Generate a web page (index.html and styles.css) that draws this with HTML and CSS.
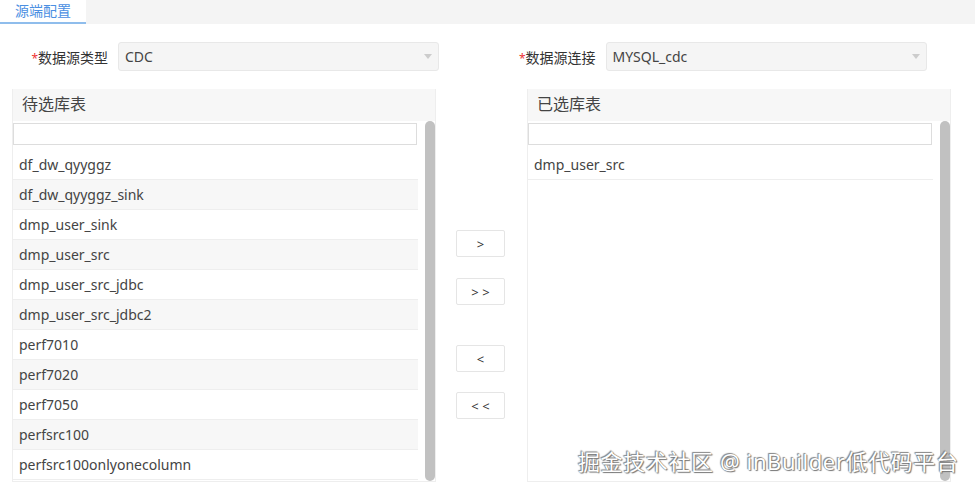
FILE: index.html
```html
<!DOCTYPE html>
<html lang="zh-CN">
<head>
  <meta charset="UTF-8">
  <title>源端配置</title>
  <link rel="stylesheet" href="styles.css">
</head>
<body>
  <div class="tabs">
    <div class="tab active">源端配置</div>
  </div>

  <div class="form-row">
    <div class="field">
      <label class="field-label"><span class="req">*</span>数据源类型</label>
      <div class="select">
        <span>CDC</span>
        <span class="arrow"></span>
      </div>
    </div>
    <div class="field">
      <label class="field-label"><span class="req">*</span>数据源连接</label>
      <div class="select">
        <span>MYSQL_cdc</span>
        <span class="arrow"></span>
      </div>
    </div>
  </div>

  <div class="transfer">
    <div class="panel">
      <div class="panel-header">待选库表</div>
      <div class="panel-body">
        <div class="list-col">
          <input class="search" type="text">
          <ul class="list">
            <li>df_dw_qyyggz</li>
            <li>df_dw_qyyggz_sink</li>
            <li>dmp_user_sink</li>
            <li>dmp_user_src</li>
            <li>dmp_user_src_jdbc</li>
            <li>dmp_user_src_jdbc2</li>
            <li>perf7010</li>
            <li>perf7020</li>
            <li>perf7050</li>
            <li>perfsrc100</li>
            <li>perfsrc100onlyonecolumn</li>
          </ul>
        </div>
        <div class="scrollbar"></div>
      </div>
    </div>

    <div class="actions">
      <button class="move-btn btn-one">&gt;</button>
      <button class="move-btn btn-all">&gt; &gt;</button>
      <button class="move-btn btn-back">&lt;</button>
      <button class="move-btn btn-back-all">&lt; &lt;</button>
    </div>

    <div class="panel">
      <div class="panel-header">已选库表</div>
      <div class="panel-body">
        <div class="list-col">
          <input class="search" type="text">
          <ul class="list">
            <li>dmp_user_src</li>
          </ul>
        </div>
        <div class="scrollbar"></div>
      </div>
    </div>
  </div>

  <div class="watermark">掘金技术社区 @ inBuilder低代码平台</div>
</body>
</html>
```

FILE: styles.css
```css
* {
  margin: 0;
  padding: 0;
  box-sizing: border-box;
  font-family: "Noto Sans", "Noto Sans CJK SC", sans-serif;
}

body {
  width: 975px;
  height: 488px;
  overflow: hidden;
  background: #fff;
  color: #444;
  position: relative;
}

.tabs {
  height: 24px;
  background: #f4f4f4;
  display: flex;
}

.tab {
  width: 86px;
  height: 24px;
  line-height: 21px;
  font-size: 14px;
  padding-left: 15px;
}

.tab.active {
  background: #fff;
  color: #4b8fe2;
  border-bottom: 2px solid #8fbdec;
}

.form-row {
  display: flex;
  padding-top: 18px;
}

.field {
  width: 489px;
  display: flex;
  align-items: center;
}

.field-label {
  width: 108px;
  text-align: right;
  font-size: 14px;
  color: #333;
}

.req {
  color: #e33;
  font-size: 12px;
}

.select {
  margin-left: 10px;
  width: 321px;
  height: 29px;
  background: #f5f5f5;
  border: 1px solid #e8e8e8;
  border-radius: 3px;
  display: flex;
  align-items: center;
  justify-content: space-between;
  padding: 0 6px;
  font-size: 14px;
  color: #444;
}

.arrow {
  width: 0;
  height: 0;
  border-left: 4px solid transparent;
  border-right: 4px solid transparent;
  border-top: 5px solid #ccc;
}

.transfer {
  display: flex;
  margin-top: 18px;
  padding-left: 12px;
}

.panel {
  width: 424px;
  height: 393px;
  border: 1px solid #eee;
  border-top: none;
}

.panel-header {
  height: 32px;
  background: #f7f7f7;
  font-size: 16px;
  color: #444;
  line-height: 31px;
  padding-left: 9px;
}

.panel-body {
  display: flex;
  height: 361px;
}

.list-col {
  width: 406px;
}

.search {
  display: block;
  width: 404px;
  height: 22px;
  margin-top: 2px;
  border: 1px solid #ddd;
  outline: none;
}

.list {
  list-style: none;
  margin-top: 5px;
}

.list li {
  height: 30px;
  line-height: 29px;
  border-bottom: 1px solid #eee;
  padding-left: 6px;
  font-size: 14px;
  color: #444;
}

.list li:nth-child(even) {
  background: #f7f7f7;
}

.scrollbar {
  width: 10px;
  height: 360px;
  margin-left: 7px;
  background: #c1c1c1;
  border-radius: 5px;
}

.actions {
  width: 91px;
  padding-left: 20px;
  display: flex;
  flex-direction: column;
  align-items: flex-start;
}

.move-btn {
  width: 49px;
  height: 27px;
  background: #fff;
  border: 1px solid #e5e5e5;
  border-radius: 2px;
  font-size: 13px;
  color: #333;
  cursor: pointer;
}

.btn-one {
  margin-top: 141px;
}

.btn-all {
  margin-top: 21px;
}

.btn-back {
  margin-top: 40px;
}

.btn-back-all {
  margin-top: 20px;
}

.watermark {
  position: absolute;
  left: 578px;
  top: 444px;
  font-size: 22px;
  color: #fff;
  letter-spacing: 0.6px;
  text-shadow: 0 0 1px #666, 1px 1px 1px #777, -1px -1px 1px #888;
}
```
